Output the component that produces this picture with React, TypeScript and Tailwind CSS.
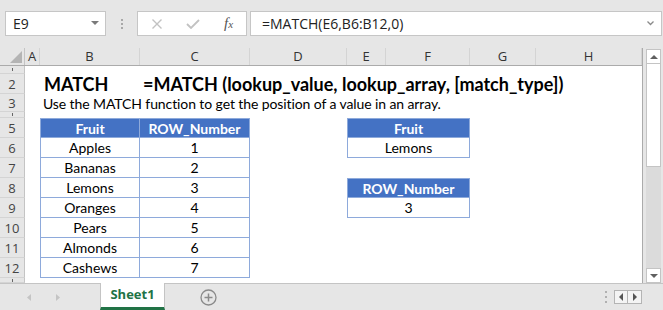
import React from "react";

const uiFont = { fontFamily: '"Open Sans", "Noto Sans", sans-serif' };
const cellFont = { fontFamily: 'Lato, "Open Sans", sans-serif' };

const colLetters = ["A", "B", "C", "D", "E", "F", "G", "H"];
const colWidths = ["w-[15px]", "w-[100px]", "w-[110px]", "w-[97px]", "w-[39px]", "w-[84px]", "w-[66px]", "w-[106px]"];

const fruits = ["Apples", "Bananas", "Lemons", "Oranges", "Pears", "Almonds", "Cashews"];

const rowHeights: Record<number, string> = {
  1: "h-[8px]",
  2: "h-[20px]",
  3: "h-[18px]",
  4: "h-[6px]",
  13: "h-[5px]",
};

function RowHead({ n }: { n: number }) {
  const short = n === 1 || n === 4 || n === 13;
  return (
    <div className="w-[25px] shrink-0 h-full bg-[#e6e6e6] border-r border-b border-r-[#c4c4c4] border-b-[#d4d4d4] flex items-center justify-center overflow-hidden text-[13px] text-[#444]" style={uiFont}>
      {short ? <span className="block h-[3px] w-[1px] bg-[#666]" /> : <span className="leading-[20px]">{n}</span>}
    </div>
  );
}

function TCell({ w, head, top, left, children }: { w: string; head?: boolean; top?: boolean; left?: boolean; children: React.ReactNode }) {
  return (
    <div
      className={`${w} shrink-0 h-full flex items-center justify-center border-r border-b border-[#8eaadb] text-[14px] ${left ? "border-l" : ""} ${top ? "border-t" : ""} ${
        head ? "bg-[#4472c4] text-white font-bold" : "bg-white text-black"
      }`}
      style={cellFont}
    >
      {children}
    </div>
  );
}

function Empty({ w }: { w: string }) {
  return <div className={`${w} shrink-0 h-full`} />;
}

function Row({ n, children }: { n: number; children?: React.ReactNode }) {
  return (
    <div className={`flex ${rowHeights[n] ?? "h-[20px]"} overflow-visible`}>
      <RowHead n={n} />
      {children}
    </div>
  );
}

function TableRow({ n }: { n: number }) {
  const i = n - 6;
  const isHead = n === 5;
  let right: React.ReactNode = <Empty w="w-[123px]" />;
  if (n === 5) right = <TCell w="w-[123px]" head top left>Fruit</TCell>;
  if (n === 6) right = <TCell w="w-[123px]" left>Lemons</TCell>;
  if (n === 8) right = <TCell w="w-[123px]" head top left>ROW_Number</TCell>;
  if (n === 9) right = <TCell w="w-[123px]" left>3</TCell>;
  return (
    <Row n={n}>
      <Empty w="w-[15px]" />
      <TCell w="w-[100px]" head={isHead} top={isHead} left>
        {isHead ? "Fruit" : fruits[i]}
      </TCell>
      <TCell w="w-[110px]" head={isHead} top={isHead}>
        {isHead ? "ROW_Number" : i + 1}
      </TCell>
      <Empty w="w-[97px]" />
      {right}
    </Row>
  );
}

function FormulaBar() {
  return (
    <div className="h-[48px] shrink-0 flex items-start pt-[11px] pl-[5px]" style={uiFont}>
      <div className="w-[101px] h-[25px] bg-white border border-[#c6c6c6] flex items-center justify-between pl-[7px] pr-[6px] text-[14px] text-[#222]">
        <span>E9</span>
        <svg width="8" height="5" viewBox="0 0 8 5"><path d="M0 0h8L4 4z" fill="#7a7a7a" /></svg>
      </div>
      <div className="w-[31px] h-[25px] flex flex-col items-center justify-center gap-[2px]">
        <div className="w-[2px] h-[2px] bg-[#a8a8a8]" />
        <div className="w-[2px] h-[2px] bg-[#a8a8a8]" />
        <div className="w-[2px] h-[2px] bg-[#a8a8a8]" />
      </div>
      <div className="w-[110px] h-[25px] bg-white border border-[#c6c6c6] flex items-center pl-[13px] gap-[23px]">
        <svg width="12" height="10" viewBox="0 0 12 10"><path d="M1.5 0.5l9 9M10.5 0.5l-9 9" stroke="#c2c2c2" strokeWidth="1.4" /></svg>
        <svg width="14" height="10" viewBox="0 0 14 10"><path d="M1 5l4 4 8-8" stroke="#c2c2c2" strokeWidth="1.8" fill="none" /></svg>
        <span className="text-[15px] italic text-[#555] ml-[1px]" style={{ fontFamily: '"Liberation Serif", serif' }}>
          f<span className="text-[11px]">x</span>
        </span>
      </div>
      <div className="ml-[3px] w-[412px] h-[25px] bg-white border border-[#c6c6c6] flex items-center justify-between pl-[11px] pr-[7px] text-[14px] text-[#222]">
        <span>=MATCH(E6,B6:B12,0)</span>
        <svg width="7" height="5" viewBox="0 0 7 5"><path d="M0.5 0.5l3 3 3-3" stroke="#8a8a8a" strokeWidth="1.3" fill="none" /></svg>
      </div>
    </div>
  );
}

function ColumnHeaders() {
  return (
    <div className="flex h-[18px] border-b border-[#ababab] bg-[#e6e6e6]" style={uiFont}>
      <div className="w-[25px] shrink-0 h-full border-r border-[#c4c4c4] relative">
        <svg className="absolute right-[2px] bottom-[2px]" width="12" height="12" viewBox="0 0 12 12"><path d="M12 0v12H0z" fill="#b4b4b4" /></svg>
      </div>
      {colLetters.map((c, i) => (
        <div key={c} className={`${colWidths[i]} shrink-0 h-full border-r border-[#d4d4d4] flex items-center justify-center text-[13px] text-[#333]`}>
          {c}
        </div>
      ))}
    </div>
  );
}

function Scrollbar() {
  return (
    <div className="w-[20px] h-full flex flex-col pl-[3px] pr-[2px] pt-[1px]">
      <div className="h-[15px] bg-white border border-[#c4c4c4] flex items-center justify-center">
        <svg width="8" height="4" viewBox="0 0 8 4"><path d="M0 4h8L4 0z" fill="#606060" /></svg>
      </div>
      <div className="h-[103px] bg-white border border-[#c4c4c4] border-t-0" />
      <div className="flex-1 bg-[#dbdbdb]" />
      <div className="h-[15px] bg-white border border-[#c4c4c4] flex items-center justify-center">
        <svg width="8" height="4" viewBox="0 0 8 4"><path d="M0 0h8L4 4z" fill="#606060" /></svg>
      </div>
    </div>
  );
}

function TabBar() {
  return (
    <div className="h-[27px] shrink-0 flex items-stretch border-t border-[#c4c4c4] bg-[#e6e6e6]" style={uiFont}>
      <div className="w-[100px] flex items-center pl-[27px] gap-[25px]">
        <svg width="4" height="7" viewBox="0 0 4 7"><path d="M4 0v7L0 3.5z" fill="#c4c4c4" /></svg>
        <svg width="4" height="7" viewBox="0 0 4 7"><path d="M0 0v7l4-3.5z" fill="#c4c4c4" /></svg>
      </div>
      <div className="w-[65px] -mt-[1px] bg-white border-x border-[#c4c4c4] border-b-[3px] border-b-[#217346] flex items-center justify-center text-[13px] font-bold text-[#217346]">
        Sheet1
      </div>
      <div className="w-[84px] flex items-center justify-center pl-[2px]">
        <svg width="17" height="17" viewBox="0 0 17 17">
          <circle cx="8.5" cy="8.5" r="7.5" stroke="#8a8a8a" strokeWidth="1.3" fill="none" />
          <path d="M8.5 4.5v8M4.5 8.5h8" stroke="#8a8a8a" strokeWidth="1.5" />
        </svg>
      </div>
      <div className="flex-1" />
      <div className="w-[17px] flex flex-col items-center justify-center gap-[3px]">
        <div className="w-[2px] h-[2px] bg-[#b0b0b0]" />
        <div className="w-[2px] h-[2px] bg-[#b0b0b0]" />
        <div className="w-[2px] h-[2px] bg-[#b0b0b0]" />
      </div>
      <div className="flex items-center pr-[21px]">
        <div className="flex h-[14px] border border-[#b4b4b4] bg-[#f4f4f4]">
          <div className="w-[13px] flex items-center justify-center border-r border-[#b4b4b4]">
            <svg width="4" height="8" viewBox="0 0 4 8"><path d="M4 0v8L0 4z" fill="#555" /></svg>
          </div>
          <div className="w-[13px] flex items-center justify-center">
            <svg width="4" height="8" viewBox="0 0 4 8"><path d="M0 0v8l4-4z" fill="#555" /></svg>
          </div>
        </div>
      </div>
    </div>
  );
}

export default function App() {
  return (
    <div className="w-[663px] h-[310px] bg-[#e6e6e6] flex flex-col overflow-hidden">
      <FormulaBar />
      <div className="h-[235px] shrink-0 flex">
        <div className="w-[643px] shrink-0 h-full border-r border-[#ababab] bg-white flex flex-col overflow-hidden">
          <ColumnHeaders />
          <Row n={1} />
          <Row n={2}>
            <Empty w="w-[15px]" />
            <div className="w-[100px] shrink-0 h-full flex items-center pl-[4px] text-[18px] font-bold text-black" style={cellFont}>
              MATCH
            </div>
            <div className="w-[110px] shrink-0 h-full flex items-center pl-[3px] text-[18px] font-bold text-black whitespace-nowrap overflow-visible" style={cellFont}>
              =MATCH (lookup_value, lookup_array, [match_type])
            </div>
          </Row>
          <Row n={3}>
            <Empty w="w-[15px]" />
            <div className="w-[100px] shrink-0 h-full flex items-center pl-[3px] text-[14px] tracking-[-0.1px] text-black whitespace-nowrap overflow-visible" style={cellFont}>
              Use the MATCH function to get the position of a value in an array.
            </div>
          </Row>
          <Row n={4} />
          {[5, 6, 7, 8, 9, 10, 11, 12].map((n) => (
            <TableRow key={n} n={n} />
          ))}
          <Row n={13} />
        </div>
        <Scrollbar />
      </div>
      <TabBar />
    </div>
  );
}
